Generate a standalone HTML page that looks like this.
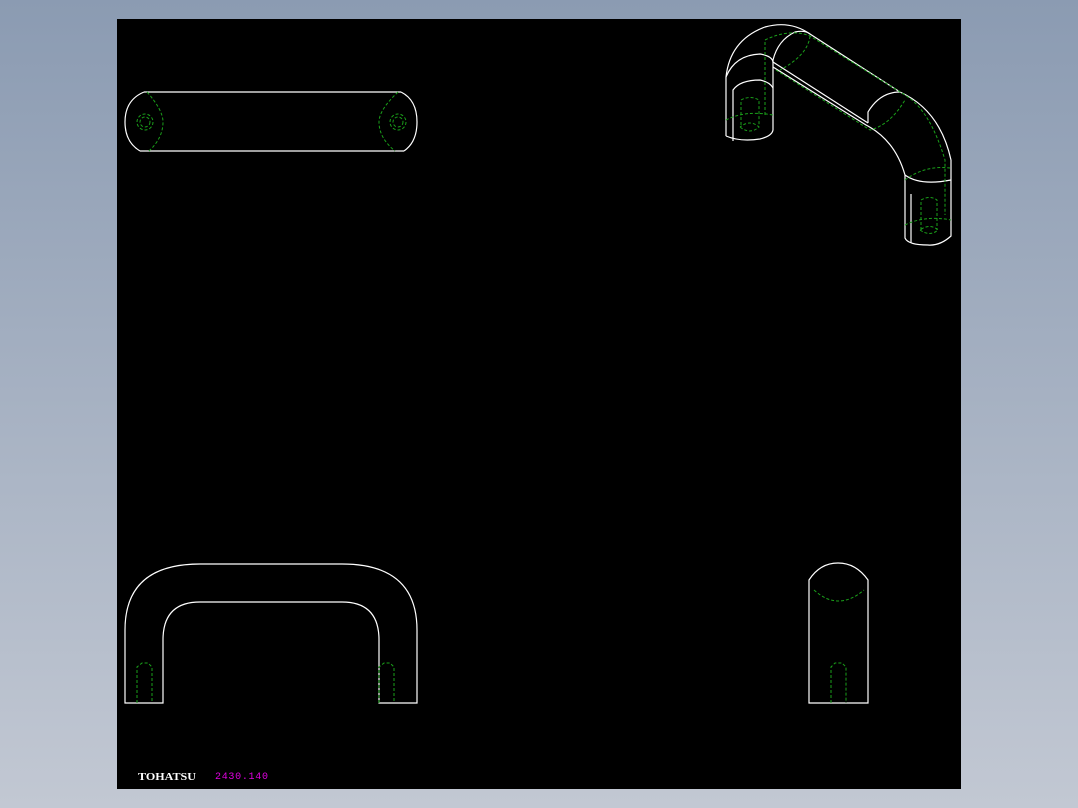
<!DOCTYPE html>
<html><head><style>
html,body{margin:0;padding:0;width:1078px;height:808px;overflow:hidden;background:linear-gradient(#8b9bb2,#c2c8d3);}
svg{position:absolute;left:0;top:0}
</style></head><body>
<svg width="1078" height="808" viewBox="0 0 1078 808">
<rect x="117" y="19" width="844" height="770" fill="#000"/>
<g fill="none" stroke="#fff" stroke-width="1.2">
<path d="M144 92 H401 M140 151 H404"/>
<path d="M144 92 Q125 100 125 122 Q125 142 140 151"/>
<path d="M401 92 Q417 100 417 122 Q417 142 404 151"/>
<path d="M125 703 V630 Q125 564 200 564 H342 Q417 564 417 630 V703 H379 V640 Q379 602 342 602 H200 Q163 602 163 640 V703 Z"/>
<path d="M809 703 V580 Q820 563 838 563 Q856 563 868 580 V703 Z"/>
<path d="M726 136 V77 Q730 40 765 27 Q790 20 810 34 L900 92 Q940 110 951 160 V236 Q940 246 928 245 Q908 245 905 238 V175 Q895 140 866 125 L773 67"/>
<path d="M726 136 Q740 142 760 139 Q772 136 773 130 V60"/>
<path d="M733 141 V90 Q740 80 760 80 Q770 82 773 88"/>
<path d="M726 77 Q735 55 760 54 Q772 56 773 62 L868 123"/>
<path d="M773 60 Q778 40 795 32 Q805 30 810 34"/>
<path d="M905 175 Q920 186 951 180"/>
<path d="M911 243 V194"/>
<path d="M868 123 V112 Q880 92 900 92"/>
</g>
<g fill="none" stroke="#1aa01a" stroke-width="1" stroke-dasharray="3,2">
<path d="M147 92 Q163 110 163 122 Q163 138 149 151"/>
<path d="M398 92 Q379 110 379 122 Q379 138 395 151"/>
<circle cx="145" cy="122" r="8"/><circle cx="145" cy="122" r="5"/>
<circle cx="398" cy="122" r="8"/><circle cx="398" cy="122" r="5"/>
<path d="M137 703 V667 L142 663 H148 L152 667 V703"/>
<path d="M379 703 V667 L384 663 H390 L394 667 V703"/>
<path d="M831 703 V667 L835 663 H842 L846 667 V703"/>
<path d="M814 590 Q838 612 864 590"/>
<path d="M741 125 V100 Q750 95 759 100 V125 M740 127 Q750 135 759 127 Q750 119 740 127"/>
<path d="M921 230 V200 Q930 195 937 200 V230 M920 230 Q930 237 938 230 Q930 223 920 230"/>
<path d="M726 120 Q745 110 773 115 M905 225 Q925 215 951 220"/>
<path d="M765 115 V40 Q790 28 810 36 L905 95 Q930 110 945 160 V215"/>
<path d="M776 70 L870 130 Q890 125 905 100 M810 36 Q808 55 780 70"/>
<path d="M905 180 Q925 165 950 168"/>
</g>
<text x="138" y="780" fill="#fff" font-family="Liberation Serif,serif" font-weight="bold" font-size="11" textLength="58" lengthAdjust="spacingAndGlyphs">TOHATSU</text>
<text x="215" y="779" fill="#e000e0" font-family="Liberation Mono,monospace" font-size="10" textLength="53" lengthAdjust="spacing">2430.140</text>
</svg>
</body></html>
